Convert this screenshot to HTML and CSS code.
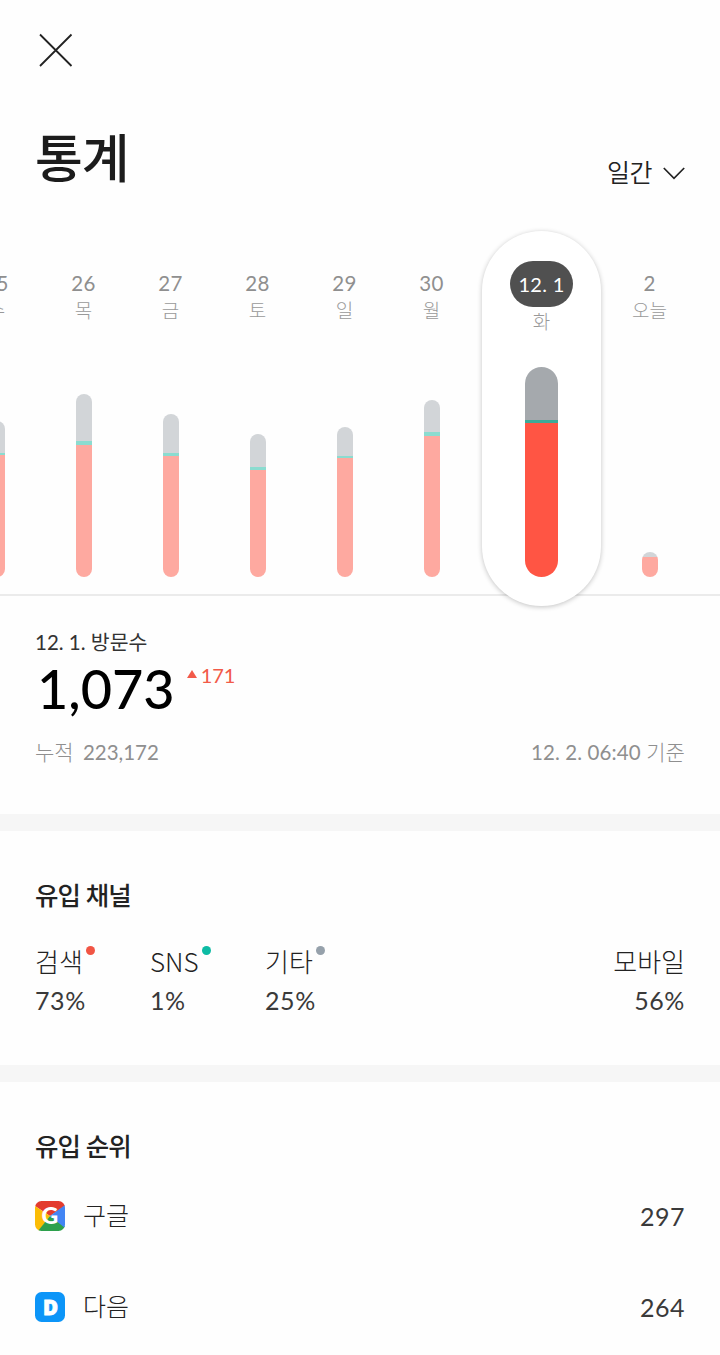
FILE: index.html
```html
<!DOCTYPE html>
<html lang="ko">
<head>
    <meta charset="UTF-8">
    <meta name="viewport" content="width=device-width, initial-scale=1.0">
    <title>통계</title>
    <link rel="stylesheet" href="styles.css">
</head>
<body>
    <header class="header">
        <button class="close-btn" aria-label="닫기">
            <svg width="34" height="34" viewBox="0 0 34 34" fill="none" stroke="#222" stroke-width="1.8">
                <path d="M1 1.5 32.5 33M32.5 1.5 1 33"/>
            </svg>
        </button>
        <div class="title-row">
            <h1>통계</h1>
            <button class="period">
                <span>일간</span>
                <svg width="22" height="13" viewBox="0 0 22 13" fill="none" stroke="#222" stroke-width="1.7">
                    <path d="M.8 1 11 11.3 21.2 1"/>
                </svg>
            </button>
        </div>
    </header>

    <section class="chart">
        <div class="day">
            <span class="date">25</span>
            <span class="weekday">수</span>
            <div class="bar" style="height: 156px"><i class="etc" style="height: 32px"></i><i class="sns" style="height: 2px"></i><i class="search"></i></div>
        </div>
        <div class="day">
            <span class="date">26</span>
            <span class="weekday">목</span>
            <div class="bar" style="height: 183px"><i class="etc" style="height: 47px"></i><i class="sns" style="height: 4px"></i><i class="search"></i></div>
        </div>
        <div class="day">
            <span class="date">27</span>
            <span class="weekday">금</span>
            <div class="bar" style="height: 163px"><i class="etc" style="height: 39px"></i><i class="sns" style="height: 3px"></i><i class="search"></i></div>
        </div>
        <div class="day">
            <span class="date">28</span>
            <span class="weekday">토</span>
            <div class="bar" style="height: 143px"><i class="etc" style="height: 33px"></i><i class="sns" style="height: 3px"></i><i class="search"></i></div>
        </div>
        <div class="day">
            <span class="date">29</span>
            <span class="weekday">일</span>
            <div class="bar" style="height: 150px"><i class="etc" style="height: 29px"></i><i class="sns" style="height: 2px"></i><i class="search"></i></div>
        </div>
        <div class="day">
            <span class="date">30</span>
            <span class="weekday">월</span>
            <div class="bar" style="height: 177px"><i class="etc" style="height: 32px"></i><i class="sns" style="height: 4px"></i><i class="search"></i></div>
        </div>
        <div class="day selected">
            <span class="date">12. 1</span>
            <span class="weekday">화</span>
            <div class="bar" style="height: 210px"><i class="etc" style="height: 53px"></i><i class="sns" style="height: 3px"></i><i class="search"></i></div>
        </div>
        <div class="day">
            <span class="date">2</span>
            <span class="weekday">오늘</span>
            <div class="bar" style="height: 25px"><i class="etc" style="height: 5px"></i><i class="search"></i></div>
        </div>
    </section>

    <section class="summary">
        <div class="summary-label">12. 1. <b>방문수</b></div>
        <div class="visits">
            <strong>1,073</strong>
            <span class="diff"><i class="up"></i>171</span>
        </div>
        <div class="total">
            <span class="sum"><em>누적</em> 223,172</span>
            <span class="asof">12. 2. 06:40 <em>기준</em></span>
        </div>
    </section>

    <section class="channels">
        <h2>유입 채널</h2>
        <div class="channel-list">
            <div class="channel">
                <span class="name dot-search">검색</span>
                <span class="value">73%</span>
            </div>
            <div class="channel">
                <span class="name dot-sns">SNS</span>
                <span class="value">1%</span>
            </div>
            <div class="channel">
                <span class="name dot-etc">기타</span>
                <span class="value">25%</span>
            </div>
            <div class="channel mobile">
                <span class="name">모바일</span>
                <span class="value">56%</span>
            </div>
        </div>
    </section>

    <section class="ranking">
        <h2>유입 순위</h2>
        <ul>
            <li>
                <svg class="logo" width="30" height="30" viewBox="0 0 30 30">
                    <clipPath id="tile"><rect width="30" height="30" rx="6.5"/></clipPath>
                    <g clip-path="url(#tile)">
                        <path fill="#e33b2e" d="M0 0h30v5L15 15 0 5z"/>
                        <path fill="#fbbc05" d="M0 5 15 15 4 30H0z"/>
                        <path fill="#2da04c" d="M3 30 15 15 30 25v5z"/>
                        <path fill="#4285f4" d="M30 4v23L15 15z"/>
                    </g>
                    <text class="g-mark" x="14.8" y="23.3">G</text>
                </svg>
                <span class="site">구글</span>
                <span class="count">297</span>
            </li>
            <li>
                <svg class="logo" width="30" height="30" viewBox="0 0 30 30">
                    <rect width="30" height="30" rx="6.5" fill="#0c95f8"/>
                    <text class="d-mark" x="15.5" y="22.6">D</text>
                </svg>
                <span class="site">다음</span>
                <span class="count">264</span>
            </li>
        </ul>
    </section>
</body>
</html>
```
FILE: styles.css
```css
* {
    box-sizing: border-box;
}
body {
    margin: 0;
    background: #fefefe;
    color: #222;
    font-family: Lato, "Noto Sans CJK KR", sans-serif;
    overflow-x: hidden;
}
button {
    background: none;
    border: none;
    padding: 0;
    color: inherit;
    font-family: inherit;
}
svg {
    display: block;
}
h1, h2, ul {
    margin: 0;
    padding: 0;
}
i, em {
    font-style: normal;
}
.header {
    height: 231px;
    padding: 33px 35px 0;
}
.close-btn {
    display: block;
    margin-left: 4px;
}
.title-row {
    display: flex;
    justify-content: space-between;
    margin-top: 53px;
}
h1 {
    font-size: 52px;
    font-weight: 500;
    line-height: 76px;
    letter-spacing: -1px;
    color: #1c1c1c;
}
.period {
    display: flex;
    align-items: center;
    gap: 11px;
    height: 34px;
    margin-top: 34px;
    font-size: 25px;
    font-weight: 350;
    letter-spacing: -0.5px;
}
.period svg {
    margin-top: 5px;
}

/* daily chart */
.chart {
    display: flex;
    justify-content: flex-end;
    height: 375px;
    padding-right: 27px;
    background: linear-gradient(#ebebeb, #ebebeb) 0 363px / 100% 2px no-repeat;
}
.day {
    flex: 0 0 87px;
    display: flex;
    flex-direction: column;
    align-items: center;
    height: 346px;
    padding-top: 37px;
}
.date {
    font-size: 20.5px;
    line-height: 30px;
    color: #8f8f8f;
    letter-spacing: 0.3px;
}
.weekday {
    font-size: 19px;
    font-weight: 300;
    line-height: 26px;
    color: #999;
}
.bar {
    display: flex;
    flex-direction: column;
    width: 16px;
    margin-top: auto;
    border-radius: 8px;
    overflow: hidden;
}
.etc { background: #d2d5d8; }
.sns { background: #8bdcd0; }
.search { background: #fea9a0; flex: 1; }
.selected {
    flex-basis: 119px;
    height: 375px;
    margin: 0 5px 0 7px;
    padding: 30px 0 29px;
    background: #fff;
    border-radius: 60px;
    box-shadow: 0 1px 5px rgba(0, 0, 0, 0.24);
}
.selected .date {
    width: 63px;
    height: 46px;
    border-radius: 23px;
    background: #505050;
    color: #fff;
    font-size: 20px;
    line-height: 46px;
    text-align: center;
}
.selected .weekday {
    line-height: 30px;
}
.selected .bar {
    width: 33px;
    border-radius: 17px;
}
.selected .etc { background: #a5a9ad; }
.selected .sns { background: #3caa98; }
.selected .search { background: #ff5544; }

.summary {
    height: 208px;
    padding: 21px 35px 0;
}
.summary-label {
    font-size: 20.5px;
    line-height: 30px;
    color: #333;
}
.summary-label b {
    font-weight: 400;
}
.visits {
    display: flex;
    align-items: flex-start;
    height: 64px;
    padding-left: 2px;
}
.visits strong {
    font-size: 54px;
    font-weight: 500;
    line-height: 64px;
    color: #000;
}
.diff {
    display: flex;
    align-items: center;
    gap: 4px;
    margin: 4px 0 0 12px;
    font-size: 20px;
    line-height: 28px;
    color: #f25a49;
}
.up {
    border: 5.5px solid transparent;
    border-top: 0;
    border-bottom: 8px solid #f25a49;
    margin-bottom: 3px;
}
.total {
    display: flex;
    justify-content: space-between;
    margin-top: 16px;
    font-size: 20.5px;
    line-height: 30px;
    color: #8f8f8f;
}
.sum {
    word-spacing: 4px;
}
.asof {
    letter-spacing: 0.1px;
}
.total em {
    font-size: 21px;
    font-weight: 300;
}

h2 {
    font-size: 25.5px;
    font-weight: 500;
    line-height: 38px;
    letter-spacing: -0.9px;
}
.channels, .ranking {
    border-top: 17px solid #f6f6f6;
    padding: 45px 35px 0;
}
.channels {
    height: 251px;
}
.channel-list {
    display: flex;
    margin-top: 28px;
}
.channel {
    width: 115px;
    display: flex;
    flex-direction: column;
    align-items: flex-start;
}
.name {
    position: relative;
    font-size: 26px;
    font-weight: 300;
    line-height: 38px;
    font-family: "Noto Sans CJK KR", sans-serif;
}
.name::after {
    position: absolute;
    top: 4px;
    right: -12px;
    width: 9px;
    height: 9px;
    border-radius: 50%;
}
.dot-search::after { content: ""; background: #f15544; }
.dot-sns::after { content: ""; background: #0dbba4; }
.dot-etc::after { content: ""; background: #96a1ab; }
.value {
    font-size: 25px;
    line-height: 40px;
    letter-spacing: 0.6px;
    color: #3a3a3a;
}
.mobile {
    margin-left: auto;
    align-items: flex-end;
}

.ranking ul {
    list-style: none;
    padding-top: 5px;
}
.ranking li {
    display: flex;
    align-items: center;
    height: 91px;
}
.site {
    margin: -4px 0 0 18px;
    font-size: 25px;
    font-weight: 300;
}
.count {
    margin-left: auto;
    font-size: 25px;
    letter-spacing: 0.5px;
    color: #3a3a3a;
}
.g-mark, .d-mark {
    fill: #fff;
    text-anchor: middle;
    font-family: Lato, sans-serif;
    font-weight: 900;
    font-size: 23px;
}
.d-mark {
    font-family: "Open Sans", sans-serif;
    font-weight: 800;
    font-size: 20.5px;
    stroke: #fff;
    stroke-width: 0.8;
}
```
